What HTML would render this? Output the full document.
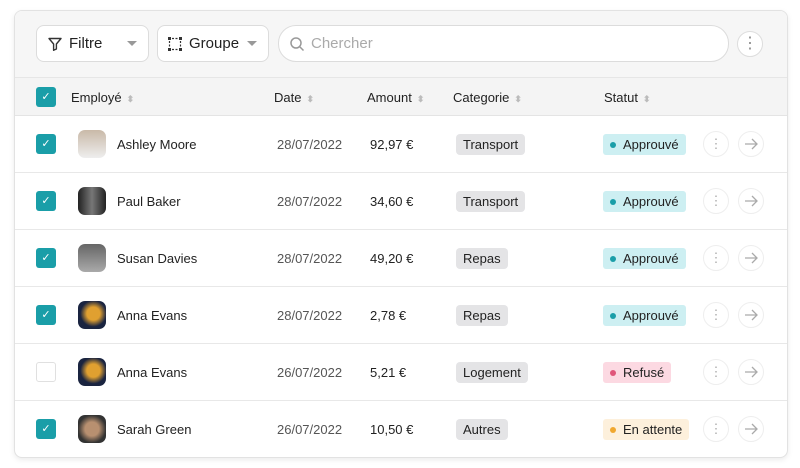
<!DOCTYPE html><html><head><style>
body{margin:0;width:800px;height:468px;background:#fff;font-family:"Liberation Sans",sans-serif;overflow:hidden;position:relative}
.card{position:absolute;left:14px;top:10px;width:772px;height:446px;border:1px solid #e2e2e2;border-radius:8px;background:#fff;box-shadow:0 2px 6px rgba(0,0,0,.08);overflow:hidden}
.tb{position:absolute;left:0;top:0;width:772px;height:66px;background:#f6f6f6;border-bottom:1px solid #e6e6e6}
.btn{position:absolute;top:14px;height:37px;border:1px solid #dcdcdc;border-radius:8px;background:#fff;box-sizing:border-box;font-size:15px;color:#222;display:flex;align-items:center}
.hdr{position:absolute;left:0;top:67px;width:772px;height:37px;background:#f4f4f4;border-bottom:1px solid #e4e4e4;font-size:13px;color:#222}
.hdr span{position:absolute;top:12px}
.s{color:#bbb;font-size:9px;margin-left:5px}
.row{position:absolute;left:0;width:772px;height:56px;border-bottom:1px solid #e8e8e8;font-size:13px;color:#222}
.row>*{position:absolute}
.cb{position:absolute;width:20px;height:20px;border-radius:3px;background:#1a9ea8;left:21px;top:18px;color:#fff;font-size:11px;text-align:center;line-height:20px}
.cb.off{background:#fff;border:1px solid #e0e0e0;box-sizing:border-box}
.av{left:63px;top:14px;width:28px;height:28px;border-radius:7px}
.tag{top:18px;height:21px;line-height:21px;padding:0 7px;border-radius:4px;background:#e4e4e6;font-size:13px}
.st{left:588px;top:18px;height:21px;line-height:21px;padding:0 7px 0 7px;border-radius:3px;font-size:13px}
.st i{display:inline-block;width:6px;height:6px;border-radius:3px;margin-right:7px;vertical-align:1px}
.circ{position:absolute;top:15px;width:26px;height:26px;border-radius:13px;border:1px solid #eee;box-sizing:border-box;text-align:center;color:#aaa;line-height:24px}
.circ svg{margin-top:6px}
</style></head><body>
<div class="card">
<div class="tb">
<div class="btn" style="left:21px;width:113px"><svg width="16" height="16" style="margin:0 6px 0 10px" viewBox="0 0 16 16"><path d="M2 2.5h12l-4.6 5.5v5l-2.8 1.3V8z" fill="none" stroke="#333" stroke-width="1.4" stroke-linejoin="round"/></svg>Filtre<span style="position:absolute;right:11px;top:15px;border:5px solid transparent;border-top:5px solid #999"></span></div>
<div class="btn" style="left:142px;width:112px"><svg width="16" height="16" style="margin:0 6px 0 9px" viewBox="0 0 16 16"><g fill="#333"><rect x="1" y="1" width="3" height="3"/><rect x="12" y="1" width="3" height="3"/><rect x="1" y="12" width="3" height="3"/><rect x="12" y="12" width="3" height="3"/></g><path d="M5 2.5h6M5 13.5h6M2.5 5v6M13.5 5v6" stroke="#333" stroke-width="1.2" stroke-dasharray="2 1.5"/></svg>Groupe<span style="position:absolute;right:11px;top:15px;border:5px solid transparent;border-top:5px solid #999"></span></div>
<div class="btn" style="left:263px;width:451px;border-radius:18px;color:#aaa"><svg width="16" height="16" style="margin:0 6px 0 10px" viewBox="0 0 16 16"><circle cx="7" cy="7" r="5" fill="none" stroke="#999" stroke-width="1.5"/><path d="M11 11l3.5 3.5" stroke="#999" stroke-width="1.5"/></svg>Chercher</div>
<div class="circ" style="left:722px;top:20px;border-color:#ddd;background:#fff;color:#888">⋮</div>
</div>
<div class="hdr"><div class="cb" style="top:9px">✓</div>
<span style="left:56px">Employé<b class="s">⬍</b></span><span style="left:259px">Date<b class="s">⬍</b></span><span style="left:352px">Amount<b class="s">⬍</b></span><span style="left:438px">Categorie<b class="s">⬍</b></span><span style="left:589px">Statut<b class="s">⬍</b></span></div>

<div class="row" style="top:105px"><div class="cb">✓</div><div class="av" style="background:linear-gradient(#c9b9a8,#eee)"></div><span style="left:102px;top:21px">Ashley Moore</span><span style="left:262px;top:21px;color:#555">28/07/2022</span><span style="left:355px;top:21px">92,97 €</span><div class="tag" style="left:441px">Transport</div><div class="st" style="background:#cdeff2"><i style="background:#1a9ea8"></i>Approuvé</div><div class="circ" style="left:688px">⋮</div><div class="circ" style="left:723px"><svg width="14" height="12" viewBox="0 0 14 12"><path d="M1 6h12M8 1l5 5-5 5" fill="none" stroke="#aaa" stroke-width="1.3"/></svg></div></div>
<div class="row" style="top:162px"><div class="cb">✓</div><div class="av" style="background:linear-gradient(90deg,#222,#777,#222)"></div><span style="left:102px;top:21px">Paul Baker</span><span style="left:262px;top:21px;color:#555">28/07/2022</span><span style="left:355px;top:21px">34,60 €</span><div class="tag" style="left:441px">Transport</div><div class="st" style="background:#cdeff2"><i style="background:#1a9ea8"></i>Approuvé</div><div class="circ" style="left:688px">⋮</div><div class="circ" style="left:723px"><svg width="14" height="12" viewBox="0 0 14 12"><path d="M1 6h12M8 1l5 5-5 5" fill="none" stroke="#aaa" stroke-width="1.3"/></svg></div></div>
<div class="row" style="top:219px"><div class="cb">✓</div><div class="av" style="background:linear-gradient(#666,#aaa)"></div><span style="left:102px;top:21px">Susan Davies</span><span style="left:262px;top:21px;color:#555">28/07/2022</span><span style="left:355px;top:21px">49,20 €</span><div class="tag" style="left:441px">Repas</div><div class="st" style="background:#cdeff2"><i style="background:#1a9ea8"></i>Approuvé</div><div class="circ" style="left:688px">⋮</div><div class="circ" style="left:723px"><svg width="14" height="12" viewBox="0 0 14 12"><path d="M1 6h12M8 1l5 5-5 5" fill="none" stroke="#aaa" stroke-width="1.3"/></svg></div></div>
<div class="row" style="top:276px"><div class="cb">✓</div><div class="av" style="background:radial-gradient(circle at 55% 45%,#e0a030 30%,#1a2440 60%)"></div><span style="left:102px;top:21px">Anna Evans</span><span style="left:262px;top:21px;color:#555">28/07/2022</span><span style="left:355px;top:21px">2,78 €</span><div class="tag" style="left:441px">Repas</div><div class="st" style="background:#cdeff2"><i style="background:#1a9ea8"></i>Approuvé</div><div class="circ" style="left:688px">⋮</div><div class="circ" style="left:723px"><svg width="14" height="12" viewBox="0 0 14 12"><path d="M1 6h12M8 1l5 5-5 5" fill="none" stroke="#aaa" stroke-width="1.3"/></svg></div></div>
<div class="row" style="top:333px"><div class="cb off"></div><div class="av" style="background:radial-gradient(circle at 55% 45%,#e0a030 30%,#1a2440 60%)"></div><span style="left:102px;top:21px">Anna Evans</span><span style="left:262px;top:21px;color:#555">26/07/2022</span><span style="left:355px;top:21px">5,21 €</span><div class="tag" style="left:441px">Logement</div><div class="st" style="background:#fcd9e2"><i style="background:#e0567a"></i>Refusé</div><div class="circ" style="left:688px">⋮</div><div class="circ" style="left:723px"><svg width="14" height="12" viewBox="0 0 14 12"><path d="M1 6h12M8 1l5 5-5 5" fill="none" stroke="#aaa" stroke-width="1.3"/></svg></div></div>
<div class="row" style="top:390px;border:none"><div class="cb">✓</div><div class="av" style="background:radial-gradient(circle,#b89070 35%,#333 70%)"></div><span style="left:102px;top:21px">Sarah Green</span><span style="left:262px;top:21px;color:#555">26/07/2022</span><span style="left:355px;top:21px">10,50 €</span><div class="tag" style="left:441px">Autres</div><div class="st" style="background:#fdf0dc"><i style="background:#f0a830"></i>En attente</div><div class="circ" style="left:688px">⋮</div><div class="circ" style="left:723px"><svg width="14" height="12" viewBox="0 0 14 12"><path d="M1 6h12M8 1l5 5-5 5" fill="none" stroke="#aaa" stroke-width="1.3"/></svg></div></div>
</div>
</body></html>
